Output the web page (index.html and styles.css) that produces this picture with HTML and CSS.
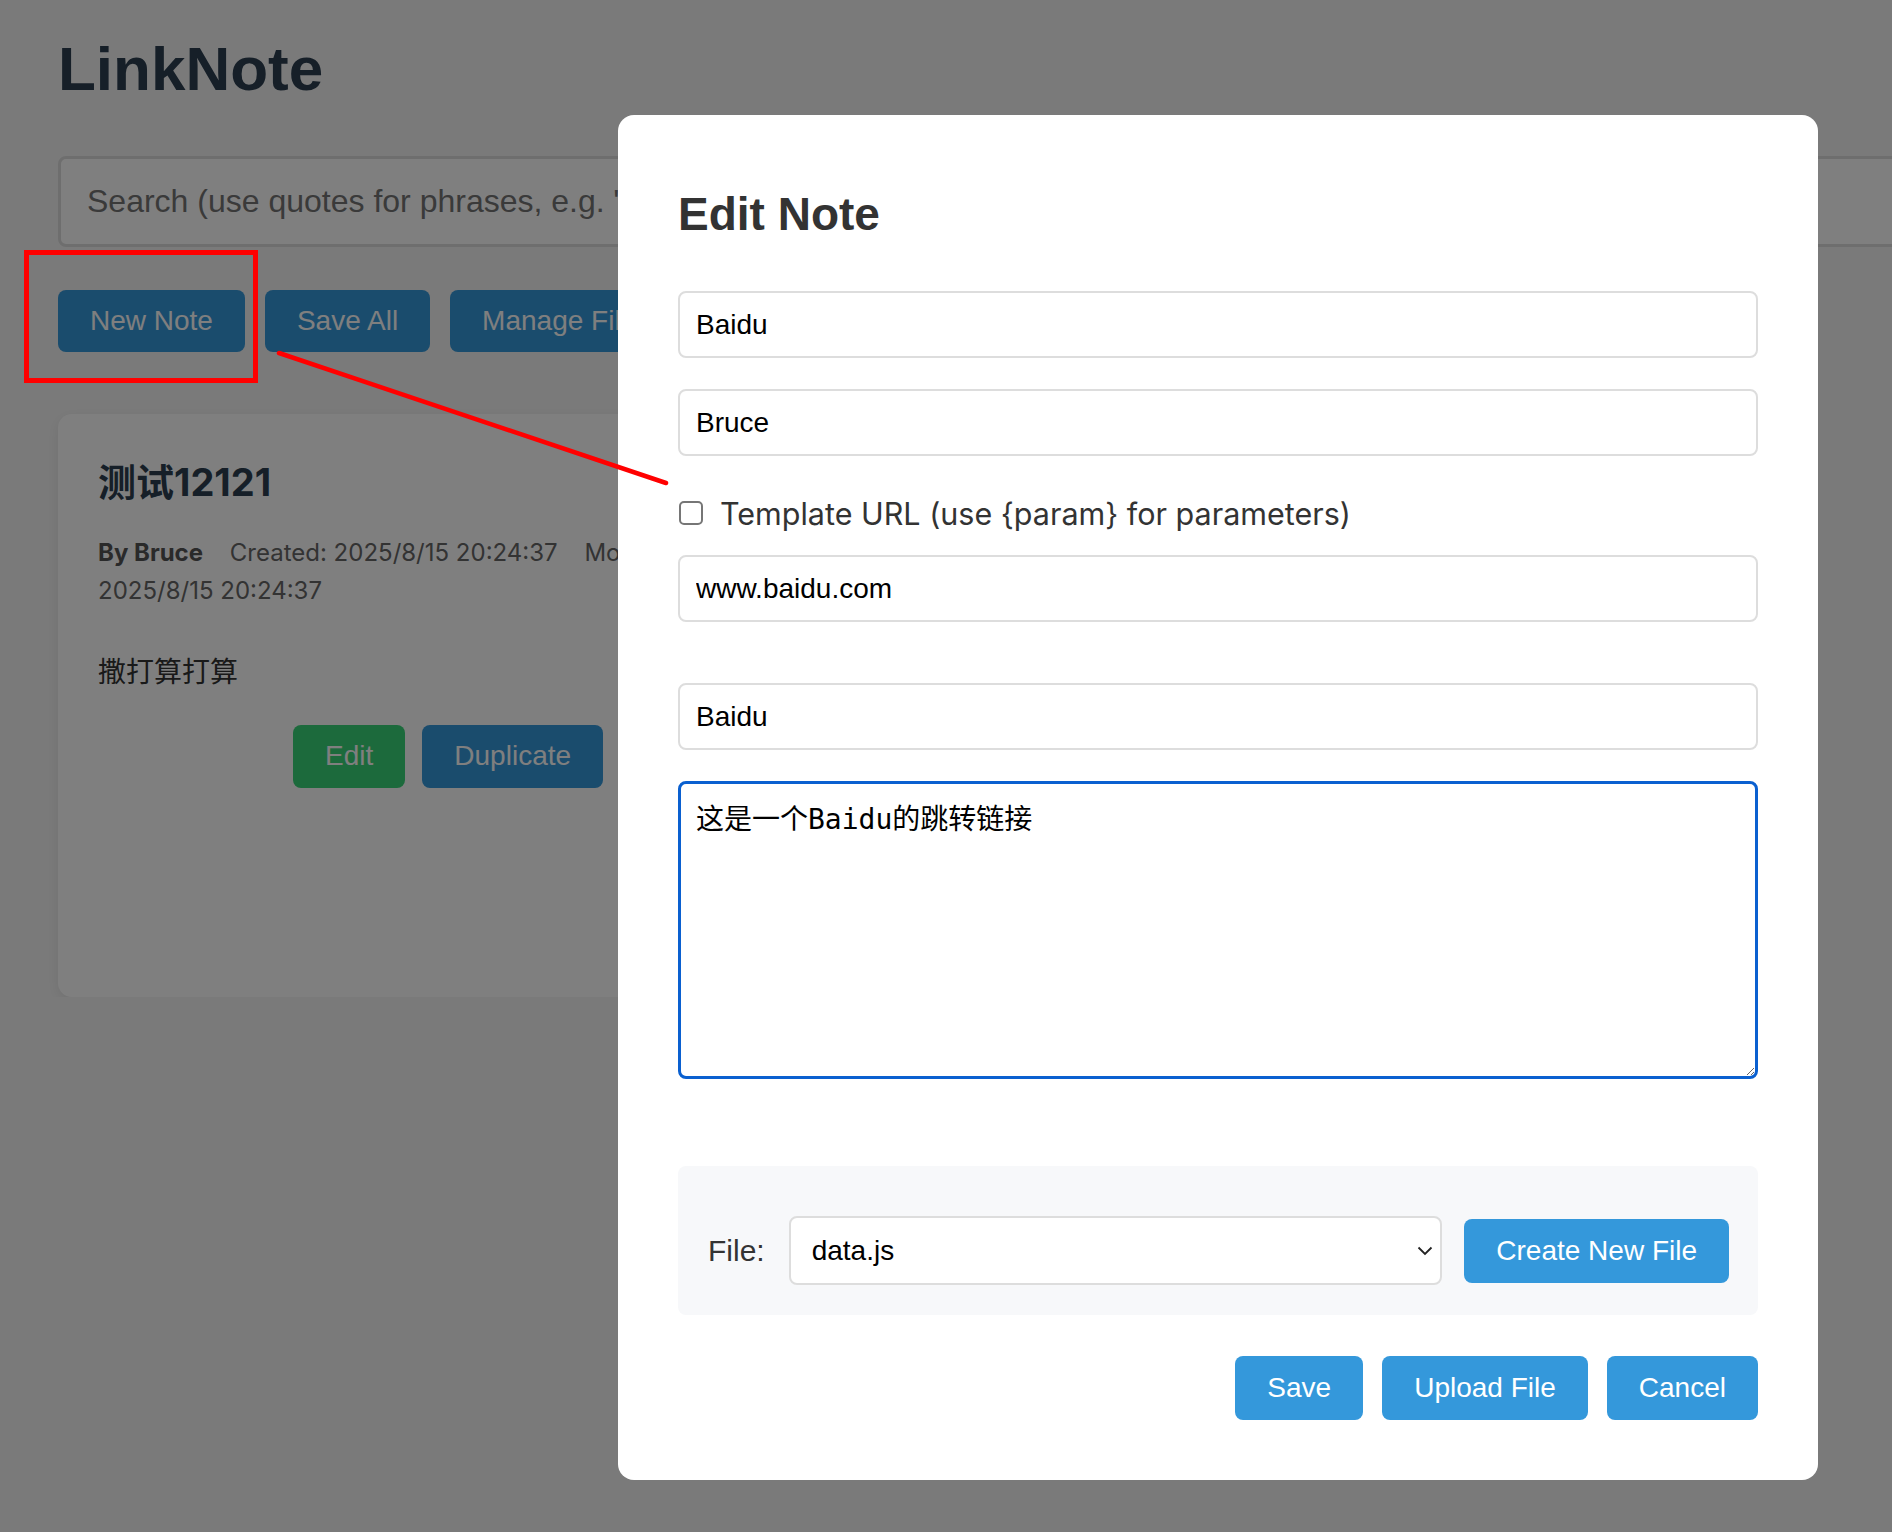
FILE: index.html
```html
<!DOCTYPE html>
<html lang="en">
<head>
  <meta charset="UTF-8" />
  <title>LinkNote</title>
<link rel="stylesheet" href="styles.css">
</head>
<body>
  <div class="app">
    <h1 class="app-title">LinkNote</h1>
    <input type="text" class="search" placeholder="Search (use quotes for phrases, e.g. &quot;exact match&quot;)" />

    <div class="toolbar">
      <button class="btn">New Note</button>
      <button class="btn">Save All</button>
      <button class="btn">Manage Files</button>
    </div>

    <div class="notes">
      <div class="note-card">
        <h3 class="note-title">测试12121</h3>
        <p class="note-meta"><span class="meta-item note-author">By Bruce</span> <span class="meta-item">Created: 2025/8/15 20:24:37</span> <span>Modified:</span> <span>2025/8/15 20:24:37</span></p>
        <p class="note-desc">撒打算打算</p>
        <div class="note-actions">
          <button class="btn btn-green">Edit</button>
          <button class="btn">Duplicate</button>
          <button class="btn btn-red">Delete</button>
        </div>
      </div>
    </div>
  </div>

  <!-- edit dialog -->
  <div class="overlay">
    <div class="modal">
      <h2 class="modal-title">Edit Note</h2>
      <input type="text" class="field" value="Baidu" />
      <input type="text" class="field" value="Bruce" />
      <label class="check-row">
        <input type="checkbox" />
        <span>Template URL (use {param} for parameters)</span>
      </label>
      <input type="text" class="field field-url" value="www.baidu.com" />
      <input type="text" class="field" value="Baidu" />
      <textarea class="note-text">这是一个Baidu的跳转链接</textarea>

      <div class="file-bar">
        <label class="file-label">File:</label>
        <div class="select-wrap">
          <select class="file-select">
            <option>data.js</option>
          </select>
          <svg class="chevron" width="16" height="10" viewBox="0 0 16 10"><path d="M1.5 1.5 L8 8 L14.5 1.5" fill="none" stroke="#222" stroke-width="1.8"/></svg>
        </div>
        <button class="btn btn-lg">Create New File</button>
      </div>

      <div class="modal-actions">
        <button class="btn btn-lg">Save</button>
        <button class="btn btn-lg">Upload File</button>
        <button class="btn btn-lg">Cancel</button>
      </div>
    </div>
  </div>

  <!-- screenshot markup -->
  <div class="annot-box"></div>
  <svg class="annot-line" width="700" height="500">
    <line x1="279" y1="353" x2="666" y2="483" stroke="#ff0000" stroke-width="4.5" stroke-linecap="round" />
  </svg>
</body>
</html>
```

FILE: styles.css
```css
* {
  box-sizing: border-box;
}

body {
  margin: 0;
  background-color: #f5f5f5;
  font-family: Inter, "Noto Sans CJK SC", sans-serif;
  color: #333;
  overflow: hidden;
}

.app {
  padding: 34px 0 0 58px;
}

.app-title {
  margin: 0 0 53px;
  font-family: "Liberation Sans", Arial, sans-serif;
  font-size: 62px;
  line-height: 69px;
  color: #2c3e50;
}

.search {
  display: block;
  width: 2320px;
  height: 91px;
  padding: 0 26px;
  border: 3px solid #ddd;
  border-radius: 8px;
  background: #fff;
  font-family: "Liberation Sans", Arial, sans-serif;
  font-size: 32px;
  color: #333;
}

.search::placeholder {
  color: #757575;
}

.toolbar {
  display: flex;
  gap: 20px;
  margin-top: 43px;
}

.btn {
  padding: 15px 32px;
  border: none;
  border-radius: 8px;
  background-color: #3498db;
  color: #fff;
  font-family: "Liberation Sans", Arial, sans-serif;
  font-size: 28px;
  line-height: 32px;
  cursor: pointer;
}

.btn-lg {
  padding: 16px 32px;
}

.btn-green {
  background-color: #38d478;
}

.btn-red {
  background-color: #e74c3c;
}

/* note cards */
.notes {
  margin-top: 62px;
}

.note-card {
  width: 747px;
  min-height: 583px;
  padding: 46px 40px 40px;
  background: #fff;
  border-radius: 14px;
  box-shadow: 0 4px 14px rgba(0, 0, 0, 0.08);
}

.note-title {
  margin: 0 0 30px;
  font-size: 38px;
  line-height: 44px;
  font-weight: 700;
  color: #2c3e50;
}

.note-meta {
  margin: 0 0 40px;
  font-size: 24px;
  line-height: 38px;
  color: #666;
}

.meta-item {
  margin-right: 20px;
}

.note-author {
  font-weight: 700;
  color: #555;
}

.note-desc {
  margin: 0;
  font-size: 28px;
  line-height: 44px;
  color: #333;
}

.note-actions {
  display: flex;
  justify-content: flex-end;
  gap: 17px;
  margin-top: 31px;
}

.note-actions .btn {
  padding: 15px 32px 16px;
}

/* modal */
.overlay {
  position: fixed;
  inset: 0;
  background: rgba(0, 0, 0, 0.5);
}

.modal {
  width: 1200px;
  margin: 115px 0 0 618px;
  padding: 60px;
  background: #fff;
  border-radius: 16px;
}

.modal-title {
  margin: 13px 0 50px;
  font-family: "Liberation Sans", Arial, sans-serif;
  font-size: 46px;
  line-height: 53px;
  color: #333;
}

.field {
  display: block;
  width: 100%;
  height: 67px;
  margin: 0 0 31px;
  padding: 0 16px;
  border: 2px solid #ddd;
  border-radius: 8px;
  background: #fff;
  font-family: "Liberation Sans", Arial, sans-serif;
  font-size: 28px;
  color: #000;
}

.field-url {
  margin-bottom: 61px;
}

.check-row {
  display: flex;
  align-items: center;
  gap: 17px;
  height: 32px;
  margin: 41px 0 26px 1px;
  font-size: 30.5px;
  color: #333;
}

.check-row input {
  appearance: none;
  width: 24px;
  height: 24px;
  margin: 0;
  border: 2px solid #767676;
  border-radius: 5px;
  background: #fff;
}

.note-text {
  display: block;
  width: 100%;
  height: 298px;
  margin: 0 0 87px;
  padding: 19px 15px 15px;
  border: 3px solid #0a60d0;
  border-radius: 8px;
  outline: none;
  font-family: "DejaVu Sans Mono", "Noto Sans CJK SC", monospace;
  font-size: 28px;
  line-height: 34px;
  color: #000;
  resize: vertical;
}

.file-bar {
  display: flex;
  align-items: center;
  gap: 22px;
  height: 149px;
  padding: 20px 29px 0 30px;
  background: #f7f8fa;
  border-radius: 8px;
}

.file-label {
  margin-right: 2px;
  font-family: "Liberation Sans", Arial, sans-serif;
  font-size: 30px;
  color: #333;
}

.select-wrap {
  position: relative;
  flex: 1;
}

.file-select {
  appearance: none;
  width: 100%;
  height: 69px;
  padding: 0 48px 0 21px;
  border: 2px solid #ddd;
  border-radius: 8px;
  background: #fff;
  font-family: "Liberation Sans", Arial, sans-serif;
  font-size: 28px;
  color: #000;
}

.chevron {
  position: absolute;
  right: 9px;
  top: 30px;
}

.modal-actions {
  display: flex;
  justify-content: flex-end;
  gap: 19px;
  margin-top: 41px;
}

/* red markup on top of the screenshot */
.annot-box {
  position: absolute;
  left: 24px;
  top: 250px;
  width: 234px;
  height: 133px;
  border: 5px solid #ff0000;
  z-index: 10;
}

.annot-line {
  position: absolute;
  left: 0;
  top: 0;
  z-index: 10;
}
```
